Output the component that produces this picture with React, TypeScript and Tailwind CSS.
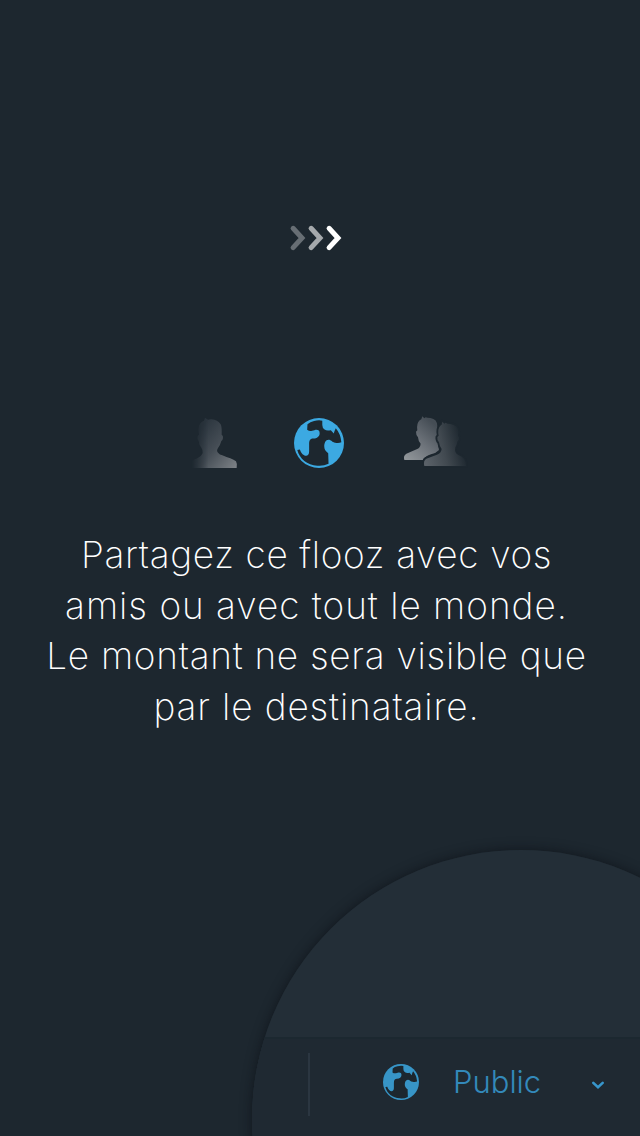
const MESSAGE = [
  { text: "Partagez ce flooz avec vos", style: "tracking-[0.63px]" },
  { text: "amis ou avec tout le monde.", style: "tracking-[0.98px]" },
  { text: "Le montant ne sera visible que", style: "tracking-[0.71px]" },
  { text: "par le destinataire.", style: "tracking-[0.86px]" },
];

function Globe({ className }: { className: string }) {
  return (
    <svg viewBox="27 29 152 152" className={className} aria-hidden="true">
      <circle cx="103" cy="105" r="76" fill="#3ca9e2" />
      <path
        fill="#1d272f"
        d="M68 48Q76 40 88 38Q101 35 113 37L113 50Q113 59 120 64Q126 69 139 66L148 76Q149 70 154 60Q169 77 171 103Q163 106 152 104C143 103 140 95 132 95C123 95 119 105 119 116C119 124 122 130 131 136L132 168Q116 176 98 174C67 172 44 153 37 126L45 125C49 138 58 145 64 144C74 142 73 133 73 123V108C73 96 77 91 86 91C97 91 105 85 105 75C105 66 98 63 89 66L82 68Q74 70 67 65Z"
      />
    </svg>
  );
}

function Person() {
  return (
    <svg viewBox="0 0 180 204" className="h-[68px] w-[60px]" aria-hidden="true">
      <defs>
        <linearGradient id="single" gradientUnits="userSpaceOnUse" x1="30" y1="80" x2="152" y2="180">
          <stop offset="0" stopColor="#2c363f" />
          <stop offset="0.45" stopColor="#454d55" />
          <stop offset="1" stopColor="#7c8186" />
        </linearGradient>
        <linearGradient id="singleFade" gradientUnits="userSpaceOnUse" x1="20" y1="0" x2="70" y2="0">
          <stop offset="0" stopColor="white" stopOpacity="0" />
          <stop offset="1" stopColor="white" />
        </linearGradient>
        <mask id="singleMask" maskUnits="userSpaceOnUse" x="0" y="0" width="180" height="204">
          <rect width="180" height="204" fill="url(#singleFade)" />
        </mask>
      </defs>
      <path
        mask="url(#singleMask)"
        fill="url(#single)"
        d="M57 38L60 29L69 35Q73 33 80 34Q98 36 107 49Q111 56 110 80Q115 83 114 90Q113 97 109 99Q106 111 99 120Q93 129 100 135Q104 140 112 142C129 149 145 154 153 160Q157 166 155 180H10Q8 163 24 156C37 150 48 147 53 135Q54 126 49 119Q42 112 41 99Q36 94 37 86Q38 81 42 80C38 56 43 42 57 38Z"
      />
    </svg>
  );
}

function People() {
  return (
    <svg viewBox="0 0 240 204" className="h-[68px] w-[80px]" aria-hidden="true">
      <defs>
        <linearGradient id="back" gradientUnits="userSpaceOnUse" x1="35" y1="155" x2="125" y2="55">
          <stop offset="0" stopColor="#91969a" />
          <stop offset="0.5" stopColor="#6d737a" />
          <stop offset="1" stopColor="#454d55" />
        </linearGradient>
        <linearGradient id="front" gradientUnits="userSpaceOnUse" x1="90" y1="150" x2="208" y2="120">
          <stop offset="0" stopColor="#5a6168" />
          <stop offset="0.5" stopColor="#414950" />
          <stop offset="1" stopColor="#1d272f" />
        </linearGradient>
      </defs>
      <path
        fill="url(#back)"
        d="M74 37L79 34L82 25L88 31L92 28Q96 30 106 30Q127 33 127 55L126 84Q134 98 130 114L132 126Q124 135 108 139Q91 144 84 156H28Q24 143 34 137L65 124Q76 120 77 107Q70 101 69 88Q63 83 63 71L67 67Q64 46 74 37Z"
      />
      <path
        fill="url(#front)"
        stroke="#1d272f"
        strokeWidth="11"
        strokeLinejoin="round"
        paintOrder="stroke"
        d="M136 53L140 50L142 41L148 47L152 44Q156 48 166 48Q189 51 190 72L189 83Q194 86 192 94L187 101Q185 112 181 118Q177 135 190 141Q214 149 213 174H88Q84 158 94 152L126 140Q139 135 140 123Q134 116 132 103Q126 97 127 87L131 83Q127 62 136 53Z"
      />
    </svg>
  );
}

function Chevrons() {
  return (
    <svg viewBox="280 215 75 45" className="h-[45px] w-[75px]" fill="none" strokeWidth="5" strokeLinecap="round" strokeLinejoin="miter" aria-hidden="true">
      <path d="M293.1 228.3L302 238L293.1 247.6" stroke="#676e74" />
      <path d="M311.1 228.3L320 238L311.1 247.6" stroke="#a5a9ac" />
      <path d="M329.1 228.3L338 238L329.1 247.6" stroke="#fff" />
    </svg>
  );
}

export default function App() {
  return (
    <main className="flex h-[1136px] w-[640px] flex-col overflow-hidden bg-[#1d272f] font-['Inter',sans-serif]">
      <div className="flex h-[260px] shrink-0 items-end pl-[280px]">
        <Chevrons />
      </div>

      <div className="mt-[148px] flex h-[68px] shrink-0 pl-[185px]">
        <Person />
        <div className="ml-[49px] pt-[10px]">
          <Globe className="size-[50px]" />
        </div>
        <div className="ml-[51px]">
          <People />
        </div>
      </div>

      <p className="mt-[54px] flex h-[202px] w-[633px] shrink-0 flex-col text-center text-[37px] leading-[50.5px] font-extralight text-white">
        {MESSAGE.map((line) => (
          <span key={line.text} className={line.style}>
            {line.text}
          </span>
        ))}
      </p>

      <section className="mt-[98px] h-[306px] shrink-0 overflow-hidden pt-[20px] pl-[232px]">
        <div className="ml-[20px] h-[538px] w-[538px] rounded-full shadow-[0_0_12px_0px_rgba(10,14,20,0.65)]">
          <div className="flex h-full flex-col overflow-hidden rounded-full bg-[#232e37]">
            <div className="h-[187px] shrink-0" />
            <div className="flex flex-1 items-start border-t-2 border-[#1c2830] bg-[#1f2932]">
              <div className="mt-[14px] ml-[56px] h-[63px] w-[2px] bg-[#2b3641]" />
              <div className="mt-[25px] ml-[73px] opacity-85">
                <Globe className="size-[36px]" />
              </div>
              <span className="mt-[23px] ml-[34px] w-[90px] text-[31px] leading-[40px] font-light text-[#3389bb]">Public</span>
              <svg viewBox="0 0 14 10" className="mt-[41px] ml-[48px] h-[10px] w-[14px]" fill="none" aria-hidden="true">
                <path d="M2.3 2.9L7 7.2L11.7 2.9" stroke="#3796cc" strokeWidth="2.6" strokeLinecap="round" />
              </svg>
            </div>
          </div>
        </div>
      </section>
    </main>
  );
}
